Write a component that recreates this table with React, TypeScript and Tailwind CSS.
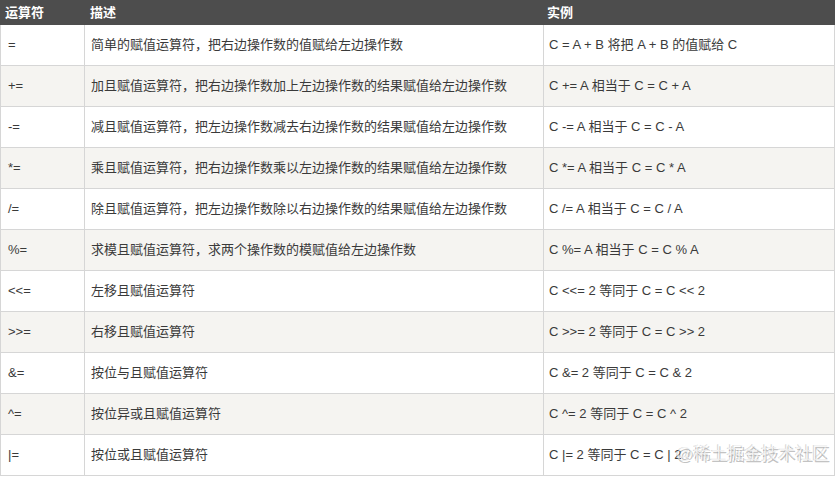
const rows: [string, string, string][] = [
  ['=', '简单的赋值运算符，把右边操作数的值赋给左边操作数', 'C = A + B 将把 A + B 的值赋给 C'],
  ['+=', '加且赋值运算符，把右边操作数加上左边操作数的结果赋值给左边操作数', 'C += A 相当于 C = C + A'],
  ['-=', '减且赋值运算符，把左边操作数减去右边操作数的结果赋值给左边操作数', 'C -= A 相当于 C = C - A'],
  ['*=', '乘且赋值运算符，把右边操作数乘以左边操作数的结果赋值给左边操作数', 'C *= A 相当于 C = C * A'],
  ['/=', '除且赋值运算符，把左边操作数除以右边操作数的结果赋值给左边操作数', 'C /= A 相当于 C = C / A'],
  ['%=', '求模且赋值运算符，求两个操作数的模赋值给左边操作数', 'C %= A 相当于 C = C % A'],
  ['<<=', '左移且赋值运算符', 'C <<= 2 等同于 C = C << 2'],
  ['>>=', '右移且赋值运算符', 'C >>= 2 等同于 C = C >> 2'],
  ['&=', '按位与且赋值运算符', 'C &= 2 等同于 C = C & 2'],
  ['^=', '按位异或且赋值运算符', 'C ^= 2 等同于 C = C ^ 2'],
  ['|=', '按位或且赋值运算符', 'C |= 2 等同于 C = C | 2'],
]

export default function App() {
  return (
    <div
      className="relative h-[477px] w-[838px] overflow-hidden bg-white text-[13px] text-[#3a3a3a]"
      style={{ fontFamily: '"Liberation Sans", "Noto Sans CJK SC", sans-serif' }}
    >
      <div className="flex h-[25px] w-[835px] items-center bg-[#4d4d4d] font-bold text-white">
        <div className="w-[85px] pl-[5px]">运算符</div>
        <div className="w-[459px] pl-[5px]">描述</div>
        <div className="flex-1 pl-[3px]">实例</div>
      </div>
      {rows.map(([op, desc, ex], i) => (
        <div
          key={op}
          className={`flex h-[41px] w-[835px] border-b border-l border-[#d6d6d6] ${
            i % 2 === 1 ? 'bg-[#f5f4f1]' : 'bg-white'
          }`}
        >
          <div className="flex w-[84px] items-center border-r border-[#d6d6d6] pl-[7px]">{op}</div>
          <div className="flex w-[459px] items-center border-r border-[#d6d6d6] pl-[6px]">{desc}</div>
          <div className="flex w-[291px] items-center border-r border-[#d6d6d6] pl-[5px]">{ex}</div>
        </div>
      ))}
      {/* watermark */}
      <div
        className="absolute left-[676px] top-[441px] text-[17px] whitespace-nowrap text-white/70"
        style={{ textShadow: '1px 2px 0 rgba(120,120,120,0.45), -1px 0 0 rgba(150,150,150,0.4)' }}
      >
        @稀土掘金技术社区
      </div>
    </div>
  )
}
